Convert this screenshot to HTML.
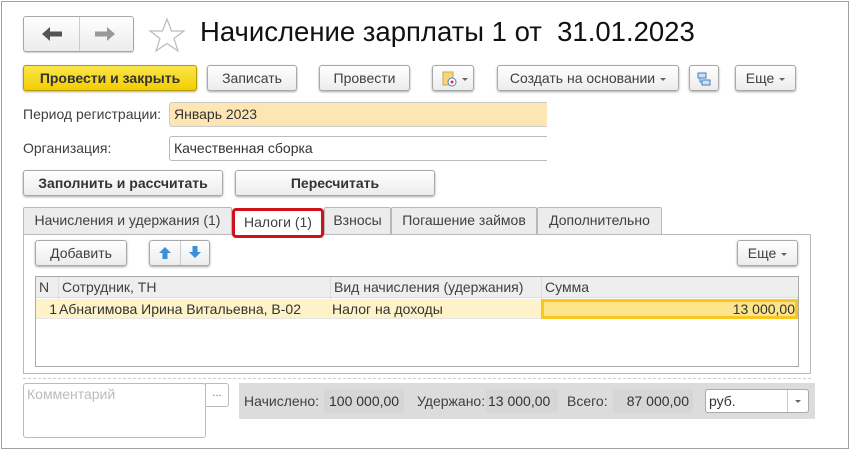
<!DOCTYPE html>
<html><head><meta charset="utf-8"><style>
*{box-sizing:border-box;margin:0;padding:0}
body{width:850px;height:450px;background:#fff;font-family:"Liberation Sans",Arial,sans-serif;font-size:14px;color:#404040;position:relative;overflow:hidden}
.a{position:absolute}
.frame{left:1px;top:1px;width:848px;height:448px;border:1px solid #a0a0a0}
.btn{position:absolute;border:1px solid #a8a8a8;border-radius:3px;background:linear-gradient(#fff,#ececec);box-shadow:0 1px 2px rgba(0,0,0,.35);text-align:center;color:#404040;font-size:14px;white-space:nowrap}
.b{font-weight:bold;color:#333}
.dd{display:inline-block;width:0;height:0;border-left:3px solid transparent;border-right:3px solid transparent;border-top:3px solid #666;vertical-align:middle;margin-left:5px}
.tab{position:absolute;top:207px;height:27px;border:1px solid #b8b8b8;border-bottom:none;background:#ececec;border-radius:2px 2px 0 0;font-size:14px;line-height:25px;text-align:center;color:#404040;white-space:nowrap}
.cell{position:absolute;line-height:20px;font-size:14px;white-space:nowrap;overflow:hidden}
</style></head><body>
<div class="a frame"></div>
<div class="btn" style="left:23px;top:16px;width:111px;height:36px;box-shadow:0 1px 1px rgba(0,0,0,.2)"></div>
<div class="a" style="left:79px;top:17px;width:1px;height:34px;background:#ccc"></div>
<svg class="a" style="left:40px;top:25px" width="24" height="18"><path d="M2 9 L10 2 V6.5 H22 V11.5 H10 V16 Z" fill="#555"/></svg>
<svg class="a" style="left:93px;top:25px" width="24" height="18"><path d="M22 9 L14 2 V6.5 H2 V11.5 H14 V16 Z" fill="#999"/></svg>
<svg class="a" style="left:148px;top:17px" width="38" height="36"><path d="M19 2 L23.5 14 L36 14 L26 21.5 L30 34 L19 26.5 L8 34 L12 21.5 L2 14 L14.5 14 Z" fill="none" stroke="#bbb" stroke-width="1.2"/></svg>
<div class="a" style="left:200px;top:16px;font-size:27.5px;color:#111;white-space:nowrap">Начисление зарплаты 1 от&nbsp; 31.01.2023</div>
<div class="btn b" style="left:23px;top:65px;width:174px;height:26px;line-height:24px;background:linear-gradient(#fbe64a,#f2cd00);border-color:#b59b00">Провести и закрыть</div>
<div class="btn" style="left:207px;top:65px;width:90px;height:26px;line-height:24px">Записать</div>
<div class="btn" style="left:319px;top:65px;width:91px;height:26px;line-height:24px">Провести</div>
<div class="btn" style="left:432px;top:65px;width:42px;height:26px;line-height:24px;text-align:left;padding-left:8px"><svg width="16" height="16" style="vertical-align:middle"><rect x="2" y="1" width="10" height="13" fill="#f3d77a" stroke="#c9a84a"/><circle cx="11" cy="11" r="4" fill="#fff" stroke="#4a80c0"/><circle cx="11" cy="11" r="1.5" fill="#d33"/></svg><span class="dd"></span></div>
<div class="btn" style="left:497px;top:65px;width:182px;height:26px;line-height:24px">Создать на основании<span class="dd"></span></div>
<div class="btn" style="left:689px;top:65px;width:30px;height:26px;line-height:24px"><svg width="16" height="16" style="vertical-align:middle"><rect x="2" y="2" width="8" height="5" fill="#cfe0f2" stroke="#3f7fc0"/><rect x="6" y="9" width="8" height="5" fill="#cfe0f2" stroke="#3f7fc0"/><path d="M4 7 V11 H6" stroke="#3f7fc0" fill="none"/></svg></div>
<div class="btn" style="left:735px;top:65px;width:61px;height:26px;line-height:24px">Еще<span class="dd"></span></div>
<div class="a" style="left:23px;top:106px">Период регистрации:</div>
<div class="a" style="left:169px;top:102px;width:378px;height:25px;background:#fde6b4;border:1px solid #ccc;border-right:none;border-radius:3px 0 0 3px;padding-left:4px;line-height:23px;color:#333">Январь 2023</div>
<div class="a" style="left:23px;top:140px">Организация:</div>
<div class="a" style="left:169px;top:136px;width:378px;height:25px;border:1px solid #bbb;border-right:none;border-radius:3px 0 0 3px;padding-left:4px;line-height:23px;color:#333">Качественная сборка</div>
<div class="btn b" style="left:23px;top:170px;width:200px;height:26px;line-height:24px">Заполнить и рассчитать</div>
<div class="btn b" style="left:235px;top:170px;width:200px;height:26px;line-height:24px">Пересчитать</div>
<div class="a" style="left:23px;top:234px;width:788px;height:140px;border:1px solid #b8b8b8"></div>
<div class="tab" style="left:23px;width:209px">Начисления и удержания (1)</div>
<div class="tab" style="left:232px;top:208px;width:92px;height:30px;background:#fff;border:3px solid #d0121b;border-radius:4px;line-height:22px">Налоги (1)</div>
<div class="tab" style="left:324px;width:67px">Взносы</div>
<div class="tab" style="left:391px;width:146px">Погашение займов</div>
<div class="tab" style="left:537px;width:125px">Дополнительно</div>
<div class="btn" style="left:35px;top:240px;width:92px;height:26px;line-height:24px">Добавить</div>
<div class="btn" style="left:149px;top:240px;width:61px;height:26px"></div>
<div class="a" style="left:180px;top:241px;width:1px;height:24px;background:#ccc"></div>
<svg class="a" style="left:158px;top:246px" width="14" height="14"><path d="M7 1 L13 7 H9.5 V13 H4.5 V7 H1 Z" fill="#3a8fd8"/></svg>
<svg class="a" style="left:188px;top:245px" width="14" height="14"><path d="M7 13 L13 7 H9.5 V1 H4.5 V7 H1 Z" fill="#3a8fd8"/></svg>
<div class="btn" style="left:737px;top:240px;width:61px;height:26px;line-height:24px">Еще<span class="dd"></span></div>
<div class="a" style="left:35px;top:276px;width:764px;height:91px;border:1px solid #aaa"></div>
<div class="a" style="left:36px;top:277px;width:762px;height:21px;background:#eee;border-bottom:1px solid #ddd"></div>
<div class="a" style="left:58px;top:277px;width:1px;height:42px;background:#ddd"></div>
<div class="a" style="left:330px;top:277px;width:1px;height:42px;background:#ddd"></div>
<div class="a" style="left:541px;top:277px;width:1px;height:42px;background:#ddd"></div>
<div class="cell" style="left:39px;top:277px">N</div>
<div class="cell" style="left:62px;top:277px">Сотрудник, ТН</div>
<div class="cell" style="left:334px;top:277px">Вид начисления (удержания)</div>
<div class="cell" style="left:545px;top:277px">Сумма</div>
<div class="a" style="left:36px;top:299px;width:762px;height:20px;background:#fdf2c8;border-bottom:1px solid #e6e6e6"></div>
<div class="a" style="left:541px;top:299px;width:257px;height:20px;background:#fde48a;border:3px solid #f8c820"></div>
<div class="cell" style="left:36px;top:299px;width:21px;text-align:right;color:#333">1</div>
<div class="cell" style="left:59px;top:299px;color:#333">Абнагимова Ирина Витальевна, В-02</div>
<div class="cell" style="left:332px;top:299px;color:#333">Налог на доходы</div>
<div class="cell" style="left:545px;top:299px;width:250px;text-align:right;color:#333">13 000,00</div>
<div class="a" style="left:23px;top:378px;width:788px;border-top:1px dashed #ccc"></div>
<div class="a" style="left:23px;top:383px;width:183px;height:55px;border:1px solid #bbb;border-radius:3px;color:#bbb;padding:2px 3px">Комментарий</div>
<div class="a" style="left:205px;top:383px;width:24px;height:24px;border:1px solid #bbb;border-radius:0 3px 3px 0;text-align:center;line-height:18px;color:#666;font-size:11px;background:#fff">...</div>
<div class="a" style="left:239px;top:383px;width:576px;height:36px;background:#dcdcdc"></div>
<div class="a" style="left:244px;top:393px">Начислено:</div>
<div class="a" style="left:324px;top:389px;width:80px;height:24px;background:#d6d6d6;border-radius:3px;line-height:24px;padding-left:5px;color:#333">100 000,00</div>
<div class="a" style="left:417px;top:393px">Удержано:</div>
<div class="a" style="left:486px;top:389px;width:72px;height:24px;background:#d6d6d6;border-radius:3px;line-height:24px;padding-left:2px;color:#333">13 000,00</div>
<div class="a" style="left:567px;top:393px">Всего:</div>
<div class="a" style="left:613px;top:389px;width:80px;height:24px;background:#d6d6d6;border-radius:3px;line-height:24px;text-align:right;padding-right:4px;color:#333">87 000,00</div>
<div class="a" style="left:705px;top:389px;width:104px;height:24px;background:#fff;border:1px solid #aaa;border-radius:3px;line-height:22px;padding-left:3px;color:#333">руб.</div>
<div class="a" style="left:787px;top:390px;width:1px;height:22px;background:#ccc"></div>
<div class="a" style="left:795px;top:400px;border-left:3px solid transparent;border-right:3px solid transparent;border-top:3px solid #666"></div>
</body></html>
